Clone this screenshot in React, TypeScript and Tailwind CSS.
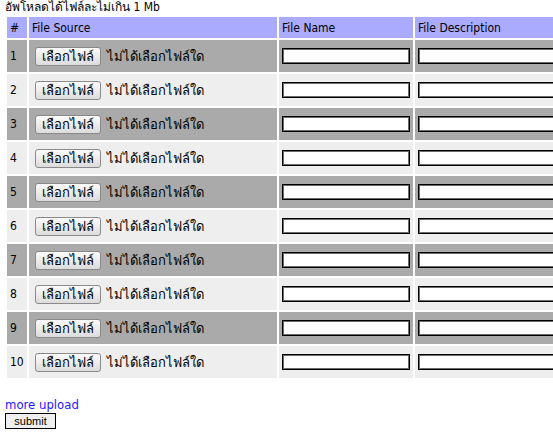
import React from "react";

const rows = Array.from({ length: 10 }, (_, i) => i + 1);

const uiFont = {
  fontFamily: "'DejaVu Sans Condensed', 'DejaVu Sans', 'Noto Sans', sans-serif",
};

function FilePicker() {
  return (
    <div className="flex items-center">
      <span className="ml-[3px] inline-flex h-[19px] w-[66px] items-center justify-center rounded-[3px] border border-[#8a8a8a] bg-gradient-to-b from-[#fbfbfb] to-[#dcdcdc] text-[13px] leading-none text-black">
        เลือกไฟล์
      </span>
      <span className="ml-[6px] text-[13px] leading-none text-black">ไม่ได้เลือกไฟล์ใด</span>
    </div>
  );
}

export default function App() {
  return (
    <div className="h-[439px] w-[553px] overflow-hidden bg-white pl-[5px] text-black" style={uiFont}>
      <div className="h-[15px] text-[12px] leading-[15px]">อัพโหลดได้ไฟล์ละไม่เกิน 1 Mb</div>
      <table className="w-[572px] table-fixed border-separate border-spacing-[2px] text-[12px]">
        <thead>
          <tr className="h-[21px] bg-[#aaaaff] text-left">
            <th className="w-[20px] px-[3px] py-0 font-normal">#</th>
            <th className="w-[248px] px-[3px] py-0 font-normal">File Source</th>
            <th className="w-[134px] px-[3px] py-0 font-normal">File Name</th>
            <th className="w-[160px] px-[3px] py-0 font-normal">File Description</th>
          </tr>
        </thead>
        <tbody>
          {rows.map((n) => (
            <tr key={n} className={n % 2 === 1 ? "h-[32px] bg-[#aaaaaa]" : "h-[32px] bg-[#eeeeee]"}>
              <td className="px-[3px] py-0">{n}</td>
              <td className="px-[3px] py-0">
                <FilePicker />
              </td>
              <td className="px-[3px] py-0">
                <input
                  type="text"
                  className="block h-[16px] w-[128px] border border-black bg-white shadow-[inset_0_0_0_1px_#6a6a6a] outline-none"
                />
              </td>
              <td className="px-[3px] py-0">
                <input
                  type="text"
                  className="block h-[16px] w-[150px] border border-black bg-white shadow-[inset_0_0_0_1px_#6a6a6a] outline-none"
                />
              </td>
            </tr>
          ))}
        </tbody>
      </table>
      <div className="mt-[17px] text-[13px] leading-[15px]">
        <a href="#" className="text-[#2a14ff]">
          more upload
        </a>
      </div>
      <button
        type="button"
        className="mt-[1px] block h-[16px] w-[51px] border border-black bg-[#efefef] text-[11px] leading-none"
        style={{ fontFamily: "'Liberation Sans', Arial, sans-serif" }}
      >
        submit
      </button>
    </div>
  );
}
